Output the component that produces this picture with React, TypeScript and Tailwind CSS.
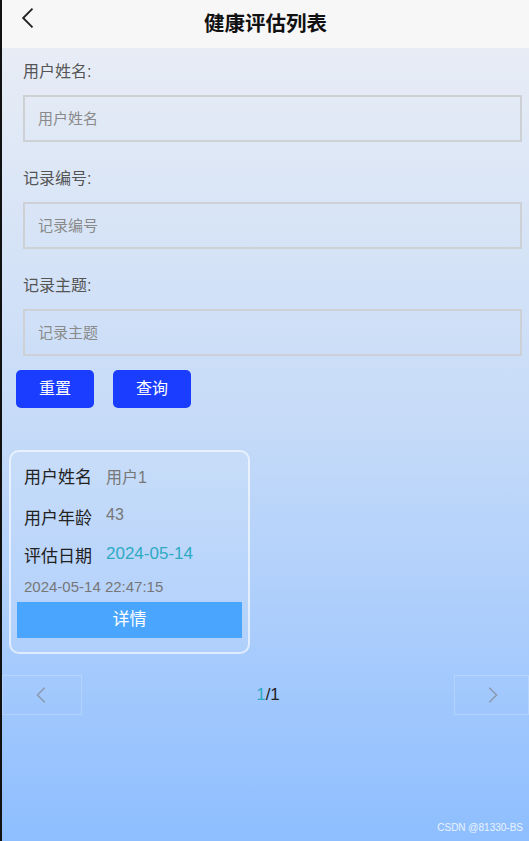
import React from 'react';

const fields = [
  { label: '用户姓名:', placeholder: '用户姓名' },
  { label: '记录编号:', placeholder: '记录编号' },
  { label: '记录主题:', placeholder: '记录主题' },
];

const Chevron: React.FC<{ dir: 'left' | 'right'; className?: string }> = ({ dir, className }) => (
  <svg viewBox="0 0 24 24" className={className} fill="none" stroke="currentColor" strokeWidth={1.6}>
    {dir === 'left' ? <path d="M15 4 7 12l8 8" /> : <path d="M9 4l8 8-8 8" />}
  </svg>
);

const App: React.FC = () => {
  return (
    <div
      className="flex h-[841px] w-[529px] overflow-hidden bg-black"
      style={{ fontFamily: '"Liberation Sans", "Noto Sans CJK SC", sans-serif' }}
    >
      <div className="w-[2px] shrink-0 bg-[#111]" />
      <div className="relative flex flex-1 flex-col bg-gradient-to-b from-[#eceff5] via-[#c6dbf8] to-[#8ebeff]">
        <header className="relative flex h-[48px] items-center justify-center bg-[#f7f7f7]">
          <Chevron dir="left" className="absolute left-[13px] top-[4px] h-[28px] w-[28px] text-[#222]" />
          <h1 className="text-[20.5px] font-bold text-[#111]">健康评估列表</h1>
        </header>

        <div className="flex flex-col gap-[27px] pl-[21px] pr-[7px] pt-[14px]">
          {fields.map((f) => (
            <div key={f.label} className="flex flex-col">
              <label className="mb-[13px] text-[16px] leading-[20px] text-[#555]">{f.label}</label>
              <input
                placeholder={f.placeholder}
                className="h-[47px] border-2 border-[#cdd0d5] bg-transparent px-[13px] text-[15px] placeholder:text-[#8a8a8a] outline-none"
              />
            </div>
          ))}
        </div>

        <div className="mt-[14px] flex gap-[19px] pl-[14px]">
          <button className="h-[38px] w-[78px] rounded-[5px] bg-[#1a3dff] text-[16px] text-white">重置</button>
          <button className="h-[38px] w-[78px] rounded-[5px] bg-[#1a3dff] text-[16px] text-white">查询</button>
        </div>

        <div className="ml-[7px] mt-[42px] flex w-[241px] flex-col rounded-[10px] border-2 border-white/60 bg-white/10 px-[6px] pb-[14px] pt-[14px]">
          <div className="flex items-center gap-[14px] pl-[7px] leading-[24px]">
            <span className="text-[17px] text-[#222]">用户姓名</span>
            <span className="text-[16px] text-[#777]">用户1</span>
          </div>
          <div className="mt-[13px] flex items-start gap-[14px] pl-[7px] leading-[24px]">
            <span className="mt-[4px] text-[17px] text-[#222]">用户年龄</span>
            <span className="text-[16px] text-[#777]">43</span>
          </div>
          <div className="mt-[11px] flex items-start gap-[14px] pl-[7px] leading-[24px]">
            <span className="mt-[3px] text-[17px] text-[#222]">评估日期</span>
            <span className="text-[17px] text-[#2eaac4]">2024-05-14</span>
          </div>
          <div className="mt-[8px] pl-[7px] text-[15px] leading-[20px] text-[#777]">2024-05-14 22:47:15</div>
          <button className="mt-[5px] h-[36px] w-full bg-[#4aa5ff] text-[17px] text-white">详情</button>
        </div>

        <div className="mt-[21px] flex h-[40px] items-center justify-between">
          <div className="flex h-full w-[80px] items-center justify-center border border-white/20">
            <Chevron dir="left" className="h-[22px] w-[22px] text-[#8a98ad]" />
          </div>
          <div className="text-[17px] text-[#222]">
            <span className="text-[#2eaac4]">1</span>/1
          </div>
          <div className="flex h-full w-[75px] items-center justify-center border border-white/20">
            <Chevron dir="right" className="h-[22px] w-[22px] text-[#8a98ad]" />
          </div>
        </div>

        <div className="absolute bottom-[6px] right-[6px] text-[10px] text-white/80">CSDN @81330-BS</div>
      </div>
    </div>
  );
};

export default App;
